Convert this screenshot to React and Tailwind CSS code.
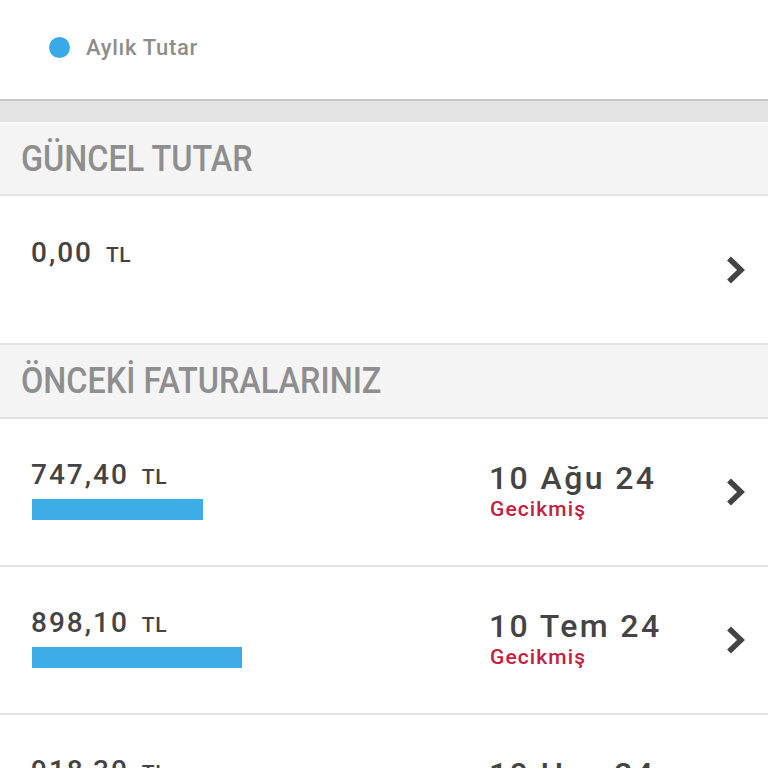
import React from 'react';

const Chevron = () => (
  <svg width="20" height="30" viewBox="0 0 20 30" className="shrink-0">
    <polyline points="3,3.5 15,15 3,26.5" fill="none" stroke="#444444" strokeWidth="5.5" strokeLinejoin="miter" strokeMiterlimit="4" />
  </svg>
);

const SectionHeader = ({ title, tall }) => (
  <div className={`${tall ? 'h-[74px]' : 'h-[72px]'} flex items-center pl-[21px] bg-[#f4f4f4] border-b-2 border-[#e3e3e3]`}>
    <span className="text-[36px] leading-none font-medium text-[#8e8e8e] scale-x-[0.9] origin-left whitespace-nowrap">
      {title}
    </span>
  </div>
);

const Amount = ({ value }) => (
  <div className="flex items-baseline leading-[32px] text-[#444444]">
    <span className="text-[28px] font-medium tracking-[2px]">{value}</span>
    <span className="text-[21px] font-medium tracking-[0.5px] ml-[13px]">TL</span>
  </div>
);

const bills = [
  { amount: '747,40', date: '10 Ağu 24', bar: 171 },
  { amount: '898,10', date: '10 Tem 24', bar: 210 },
  { amount: '918,30', date: '10 Haz 24', bar: 215 },
];

export default function App() {
  return (
    <div className="w-full min-h-screen bg-white" style={{ fontFamily: 'Roboto, "Noto Sans", sans-serif' }}>
      <div className="h-[99px] flex items-start pt-[37px] pl-[49px]">
        <span className="w-[21px] h-[21px] rounded-full bg-[#3aa9e7]"></span>
        <span className="ml-[16px] text-[22px] leading-[21px] font-medium tracking-[0.7px] text-[#8d8d8d]">Aylık Tutar</span>
      </div>
      <div className="h-[23px] bg-[#e4e4e4] border-t-2 border-[#c9c9c9]"></div>
      <div className="border-t-2 border-[#fafafa]">
        <SectionHeader title="GÜNCEL TUTAR" />
      </div>

      <div className="h-[149px] flex items-start pl-[31px] pr-[22px] border-b-2 border-[#e3e3e3]">
        <div className="flex-1 pt-[41px]">
          <Amount value="0,00" />
        </div>
        <div className="self-center">
          <Chevron />
        </div>
      </div>

      <SectionHeader title="ÖNCEKİ FATURALARINIZ" tall />

      {bills.map((b) => (
        <div key={b.date} className="h-[148px] flex items-start pl-[31px] pr-[22px] border-b-2 border-[#e3e3e3]">
          <div className="flex-1 pt-[40px]">
            <Amount value={b.amount} />
            <div className="mt-[6px] ml-[1px] h-[21px] bg-[#3dade7]" style={{ width: b.bar }}></div>
          </div>
          <div className="w-[237px] pt-[41px]">
            <div className="text-[32px] leading-[36px] font-medium tracking-[2.4px] text-[#444444] whitespace-nowrap">{b.date}</div>
            <div className="mt-[1px] ml-[1px] text-[21px] leading-[24px] font-medium tracking-[1.1px] text-[#c4213c]">Gecikmiş</div>
          </div>
          <div className="self-center">
            <Chevron />
          </div>
        </div>
      ))}
    </div>
  );
}
